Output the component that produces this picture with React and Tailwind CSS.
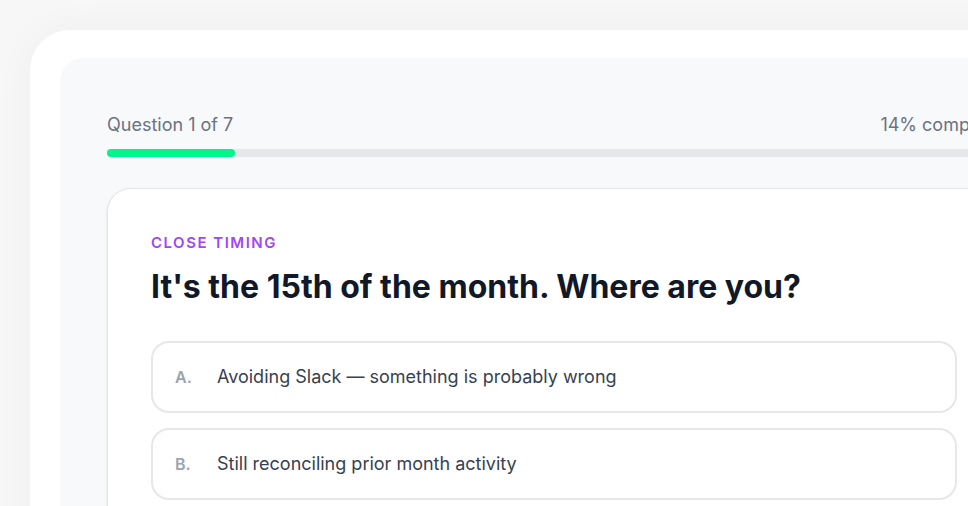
import React from "react";

const options = [
  { letter: "A.", text: "Avoiding Slack \u2014 something is probably wrong" },
  { letter: "B.", text: "Still reconciling prior month activity" },
];

const App = () => {
  const progress = 1 / 7;

  return (
    <div
      className="h-[506px] w-[968px] overflow-hidden bg-[#f7f7f7] pl-[30px] pt-[30px]"
      style={{ fontFamily: "Inter, 'Noto Sans', sans-serif" }}
    >
      {/* Outer frame */}
      <div className="w-[1040px] rounded-[40px] bg-white pl-[30px] pt-[28px] pb-10 shadow-[0_0_40px_rgba(0,0,0,0.04)]">
        {/* Inner panel */}
        <div className="rounded-[24px] bg-[#f8f9fb] pl-[47px] pt-[53px] pb-10">
          <div className="w-[894px]">
            {/* Progress header */}
            <div className="flex items-center justify-between text-lg leading-7 text-[#6b7280]">
              <span>Question 1 of 7</span>
              <span>14% complete</span>
            </div>
            <div className="mt-[10px] h-2 w-full rounded-full bg-[#e5e7eb]">
              <div
                className="h-2 rounded-full bg-[#00f58c]"
                style={{ width: `${progress * 100}%` }}
              />
            </div>

            {/* Question card */}
            <div className="mt-[31px] rounded-[24px] border border-[#e5e7eb] bg-white px-[43px] pt-11 pb-11 shadow-sm">
              <p className="text-[15px] font-semibold uppercase leading-5 tracking-[0.1em] text-[#a445f7]">
                Close timing
              </p>
              <h2 className="mt-4 text-[32px] font-bold leading-9 text-[#111827]">
                It's the 15th of the month. Where are you?
              </h2>

              <div className="mt-9 flex flex-col gap-[15px]">
                {options.map((opt) => (
                  <div
                    key={opt.letter}
                    className="flex h-[72px] items-center rounded-[18px] border-2 border-[#e5e7eb] bg-white px-[22px]"
                  >
                    <span className="w-[42px] text-base font-semibold text-[#9ca3af]">
                      {opt.letter}
                    </span>
                    <span className="text-lg text-[#374151]">{opt.text}</span>
                  </div>
                ))}
              </div>
            </div>
          </div>
        </div>
      </div>
    </div>
  );
};

export default App;
